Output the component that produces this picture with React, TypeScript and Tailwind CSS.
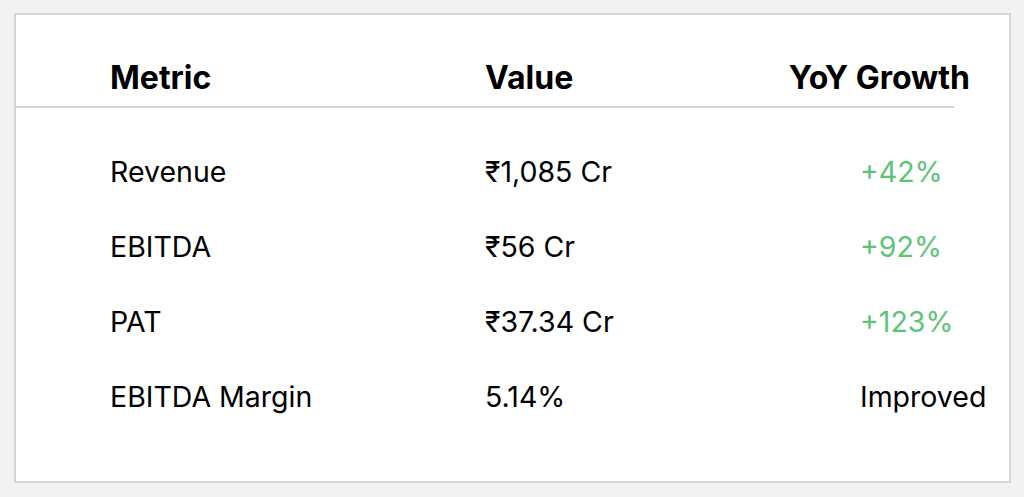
import React from "react";

const rows = [
  { m: "Revenue", v: "₹1,085 Cr", g: "+42%", green: true },
  { m: "EBITDA", v: "₹56 Cr", g: "+92%", green: true },
  { m: "PAT", v: "₹37.34 Cr", g: "+123%", green: true },
  { m: "EBITDA Margin", v: "5.14%", g: "Improved", green: false },
];

export default function App() {
  return (
    <div
      className="w-[1024px] h-[497px] bg-[#f2f2f2] pt-[13px] pl-[14px] overflow-hidden"
      style={{ fontFamily: "Inter, 'Noto Sans', sans-serif" }}
    >
      <div className="w-[997px] h-[470px] bg-white border-2 border-[#d6d6d6] text-black">
        <div className="w-[938px] h-[93px] border-b-2 border-[#d6d6d6] flex items-end pb-[9px] pl-[94px] text-[32px] font-bold leading-[38px]">
          <div className="w-[375px]">Metric</div>
          <div className="w-[300px]">Value</div>
          <div className="flex-1 flex justify-end mr-[-16px] whitespace-nowrap">YoY Growth</div>
        </div>
        <div className="pt-[26px] pl-[94px]">
          {rows.map((r) => (
            <div key={r.m} className="h-[75px] flex items-center text-[28.5px] leading-[34px]">
              <div className="w-[375px]">{r.m}</div>
              <div className="w-[375px]">{r.v}</div>
              <div className={r.green ? "text-[#5cc476]" : "text-black"}>{r.g}</div>
            </div>
          ))}
        </div>
      </div>
    </div>
  );
}
